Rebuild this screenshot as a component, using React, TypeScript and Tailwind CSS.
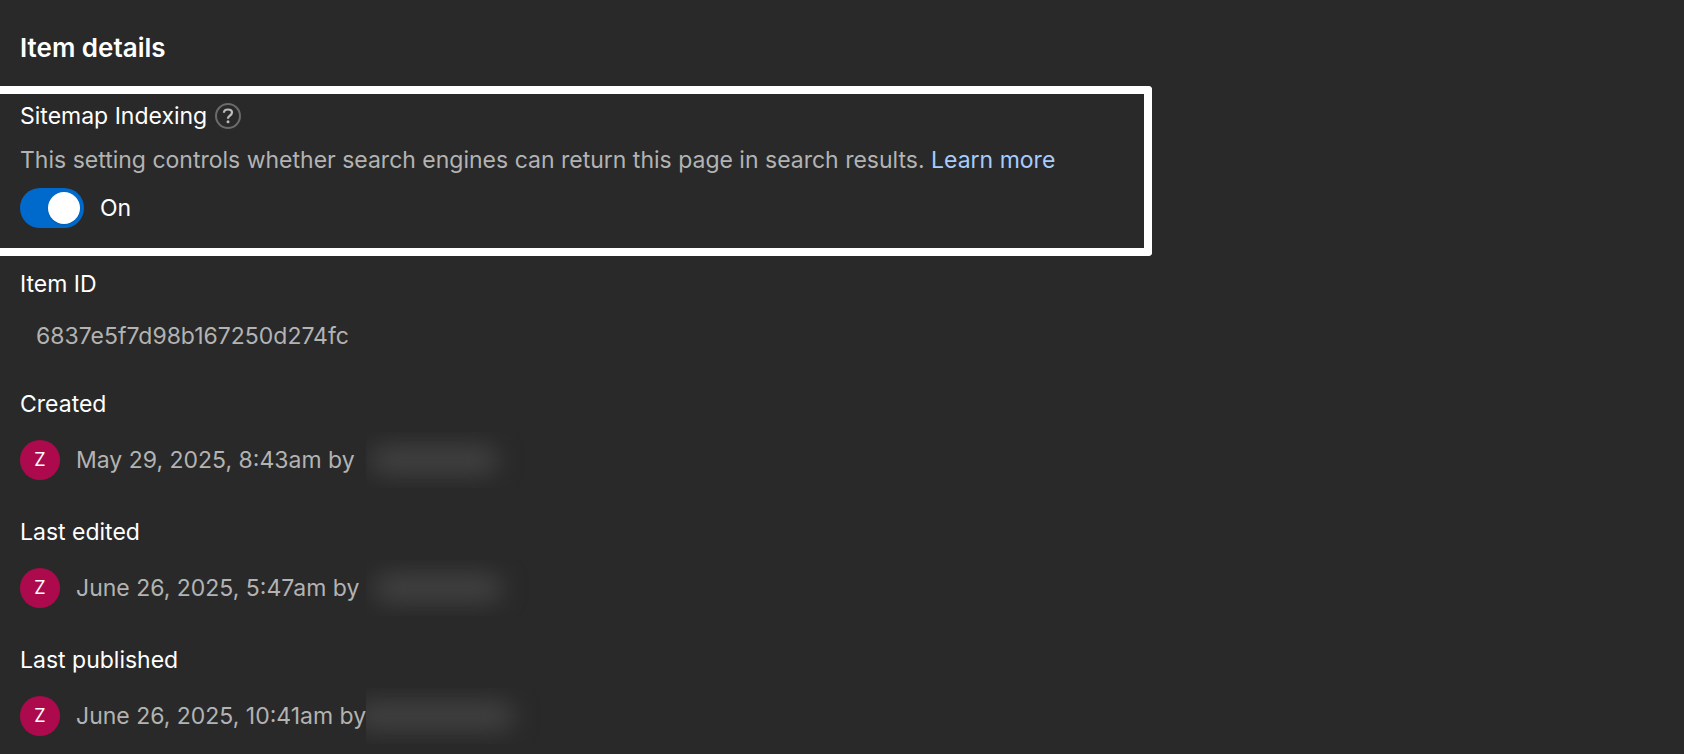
import { useState } from "react";

type HistoryEntry = {
  label: string;
  text: string;
  smudge: string;
};

const history: HistoryEntry[] = [
  { label: "Created", text: "May 29, 2025, 8:43am by", smudge: "ml-1 w-[128px]" },
  { label: "Last edited", text: "June 26, 2025, 5:47am by", smudge: "ml-2 w-[128px]" },
  { label: "Last published", text: "June 26, 2025, 10:41am by", smudge: "-ml-3 w-[160px]" },
];

function HelpIcon() {
  return (
    <svg width="26" height="26" viewBox="0 0 26 26" fill="none" aria-hidden="true">
      <circle cx="13" cy="13" r="12" stroke="#6b6b6b" strokeWidth="2" />
      <path
        d="M8.900 9.800C9 7.600 10.600 6.500 13 6.500c2.400 0 4 1.200 4 3.100 0 1.500-.9 2.300-2.200 3.100-1.300.8-1.800 1.400-1.800 2.800v.3"
        stroke="#bdbdbd"
        strokeWidth="2.200"
      />
      <circle cx="13" cy="18.800" r="1.500" fill="#bdbdbd" />
    </svg>
  );
}

function Toggle({ checked, onChange }: { checked: boolean; onChange: (value: boolean) => void }) {
  return (
    <label className="flex w-fit cursor-pointer items-center gap-4">
      <input
        type="checkbox"
        role="switch"
        checked={checked}
        onChange={(event) => onChange(event.target.checked)}
        className="peer sr-only"
      />
      <span className="flex h-10 w-16 items-center rounded-full bg-[#5e5e5e] p-1 peer-checked:justify-end peer-checked:bg-[#006acc]">
        <span className="size-8 rounded-full bg-white shadow-sm" />
      </span>
      <span>{checked ? "On" : "Off"}</span>
    </label>
  );
}

function HistoryRow({ label, text, smudge }: HistoryEntry) {
  return (
    <section className="mt-9 px-5">
      <h2>{label}</h2>
      <div className="mt-5 flex h-10 items-center">
        <span className="mr-4 flex size-10 shrink-0 items-center justify-center rounded-full bg-[#ad0a4e] text-[18px]">
          Z
        </span>
        <p className="w-[290px] shrink-0 whitespace-nowrap text-[#b3b3b3]">{text}</p>
        <span className="-my-2 flex h-14 w-[200px] shrink-0 items-center overflow-hidden" aria-hidden="true">
          <span className={`h-7 shrink-0 rounded-full bg-[#424242] blur-[12px] ${smudge}`} />
        </span>
      </div>
    </section>
  );
}

export default function App() {
  const [indexing, setIndexing] = useState(true);

  return (
    <main className="min-h-screen bg-[#292929] pt-8 font-['Inter',sans-serif] text-[23px] leading-8 text-white">
      <h1 className="px-5 text-[26px] leading-8 font-semibold">Item details</h1>

      <section className="mt-[22px] w-full max-w-[1152px] rounded-r-[4px] border-8 border-l-0 border-white px-5 pt-[6px] pb-5">
        <div className="flex items-center gap-2">
          <h2>Sitemap Indexing</h2>
          <button type="button" aria-label="About sitemap indexing">
            <HelpIcon />
          </button>
        </div>
        <p className="mt-3 mb-3 text-[#b3b3b3]">
          This setting controls whether search engines can return this page in search results.{" "}
          <a href="#learn-more" className="text-[#a6cdff]">
            Learn more
          </a>
        </p>
        <Toggle checked={indexing} onChange={setIndexing} />
      </section>

      <section className="mt-3 px-5">
        <h2>Item ID</h2>
        <p className="mt-5 pl-4 text-[#b3b3b3]">6837e5f7d98b167250d274fc</p>
      </section>

      {history.map((entry) => (
        <HistoryRow key={entry.label} {...entry} />
      ))}
    </main>
  );
}
